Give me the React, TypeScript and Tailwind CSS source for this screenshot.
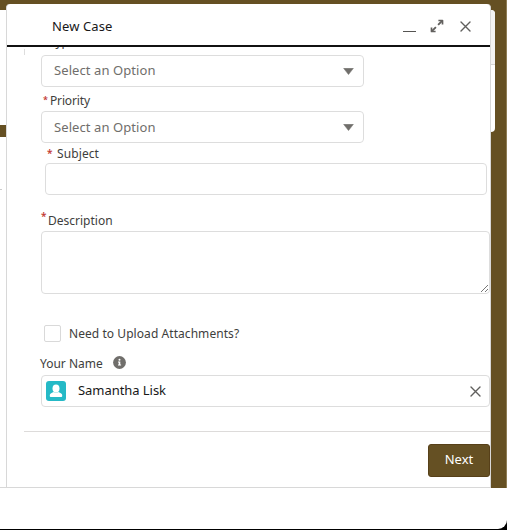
import React from "react";

const font = "font-['Noto_Sans','Open_Sans',sans-serif]";

function Select({ textClass }: { textClass: string }) {
  return (
    <div className="ml-[34px] flex h-[32px] w-[323px] shrink-0 items-center justify-between rounded-[4px] border border-[#dddddd] pl-[12px] pr-[9px]">
      <span className={`${textClass} text-[13px] leading-[18px] tracking-[0.08px] text-[#706e6b]`}>Select an Option</span>
      <svg width="11" height="7" viewBox="0 0 11 7">
        <path d="M.6.3h9.8L5.5 6.6z" fill="#706e6b" stroke="#706e6b" strokeWidth=".5" strokeLinejoin="round" />
      </svg>
    </div>
  );
}

function Cross() {
  return (
    <svg width="11" height="11" viewBox="0 0 11 11" className="shrink-0">
      <path d="M1 1l9 9M10 1l-9 9" stroke="#605f5d" strokeWidth="1.4" strokeLinecap="round" />
    </svg>
  );
}

export default function App() {
  return (
    <div className={`relative h-[530px] w-[507px] overflow-hidden bg-black ${font}`}>
      <div className="flex h-[529px] flex-col overflow-hidden rounded-br-[9px] bg-white">
        <div className="flex h-[488px] w-full flex-col border-r border-[#8e7c55] bg-[#655023]">
          <div className="mt-[10px] h-[122px] w-[495px] rounded-r-[4px] bg-white">
            <div className="h-[55px] rounded-tr-[4px] border-b border-[#d4d4d4] bg-[#f3f3f3]" />
          </div>
        </div>
      </div>

      {/* Page content visible beside the docked composer */}
      <div className="absolute left-0 top-[10px] flex h-[478px] w-[8px] flex-col">
        <div className="h-[115px] bg-white" />
        <div className="h-[12px] bg-[#655023]" />
        <div className="flex-1 bg-white pt-[52px]">
          <div className="h-px w-[2px] bg-[#ccc]" />
        </div>
      </div>

      <div className="absolute left-0 top-[487px] h-px w-[491px] bg-[#d8d8d8]" />

      <section className="absolute left-[6px] top-[4px] flex h-[484px] w-[485px] flex-col overflow-hidden rounded-t-[4px] border-x border-b border-[#d8d8d8] bg-white">
        <header className="flex h-[43px] shrink-0 items-center border-b-2 border-[#111] pl-[45px] pr-[19px]">
          <h1 className="mt-[2px] flex-1 text-[13px] leading-[18px] tracking-[0.1px] text-[#181818]">New Case</h1>
          <div className="mt-[14px] h-[1.5px] w-[13px] bg-[#555452]" />
          <svg width="14" height="14" viewBox="0 0 14 14" className="ml-[14px] mt-[3px]">
            <g fill="none" stroke="#62605e" strokeWidth="1.9">
              <path d="M8.1 5.9l4-4M5.9 8.1l-4 4" />
              <path d="M8.4 1.5h4.1v4.1M1.5 8.4v4.1h4.1" strokeLinejoin="round" strokeWidth="1.7" />
            </g>
          </svg>
          <div className="ml-[16px] mt-[3px]"><Cross /></div>
        </header>

        <div className="flex flex-1 flex-col overflow-hidden">
          <div className="flex h-[8px] shrink-0 overflow-hidden pl-[17px]">
            <div className="mt-[2px] h-[8px] w-px bg-[#ddd]" />
            <span className="-mt-[13px] ml-[24px] text-[12px] leading-[16px] text-[#3e3e3c]">Type</span>
          </div>
          <Select textClass="-mt-[2px]" />
          <div className="flex h-[24px] shrink-0 items-center pl-[36px] pt-[3px] text-[12px] leading-[16px] text-[#3e3e3c]">
            <span className="-mt-[2px] w-[7px] text-[9px] font-semibold text-[#c23934]">*</span>
            <span className="tracking-[-0.15px]">Priority</span>
          </div>
          <Select textClass="mt-0" />
          <div className="flex h-[20px] shrink-0 items-center pl-[40px] pt-[1px] text-[12px] leading-[16px] text-[#3e3e3c]">
            <span className="-mt-[2px] w-[10px] text-[10px] font-semibold text-[#c23934]">*</span>
            <span className="tracking-[0.1px]">Subject</span>
          </div>
          <div className="ml-[38px] h-[32px] w-[442px] shrink-0 rounded-[4px] border border-[#dddddd]" />
          <div className="flex h-[36px] shrink-0 items-center pl-[34px] pt-[15px] text-[12px] leading-[16px] text-[#3e3e3c]">
            <span className="-mt-[9px] w-[7px] text-[10px] font-semibold text-[#c23934]">*</span>
            <span>Description</span>
          </div>
          <div className="ml-[34px] flex h-[63px] shrink-0 items-end justify-end rounded-[4px] border border-[#dddddd]">
            <svg width="9" height="9" viewBox="0 0 9 9">
              <path d="M1 8l7-7M5 8l3-3" stroke="#777" strokeWidth="1" />
            </svg>
          </div>
          <div className="mt-[30px] flex h-[18px] shrink-0 items-center pl-[37px]">
            <div className="h-[17px] w-[17px] rounded-[2px] border border-[#d9d9d9]" />
            <span className="ml-[8px] mt-px text-[12px] leading-[16px] tracking-[0.06px] text-[#3e3e3c]">Need to Upload Attachments?</span>
          </div>
          <div className="flex h-[33px] shrink-0 items-center pl-[33px] pt-[10px] text-[12px] leading-[16px] text-[#3e3e3c]">
            <span>Your Name</span>
            <svg width="13" height="13" viewBox="0 0 13 13" className="-mt-[2px] ml-[10px]">
              <circle cx="6.5" cy="6.5" r="6.4" fill="#706e6b" />
              <circle cx="6.5" cy="3.7" r="1" fill="white" />
              <path d="M5 5.5h2.3v3h.8v1H5v-1h.7v-2H5z" fill="white" />
            </svg>
          </div>
          <div className="ml-[34px] flex h-[32px] shrink-0 items-center rounded-[4px] border border-[#dddddd] pl-[4px] pr-[8px]">
            <svg width="20" height="20" viewBox="0 0 20 20">
              <rect width="20" height="20" rx="3" fill="#25b9c6" />
              <ellipse cx="10" cy="7.4" rx="3.5" ry="4" fill="white" />
              <path d="M3.8 15.3v-1.2c0-1.7 2.3-2.6 4.1-3.2.8.8 3.4.8 4.2 0 1.8.6 4.1 1.5 4.1 3.2v1.2c0 .5-.4.8-.9.8H4.7c-.5 0-.9-.3-.9-.8z" fill="white" />
            </svg>
            <span className="-mt-[2px] ml-[12px] flex-1 text-[13px] leading-[18px] tracking-[-0.05px] text-[#181818]">Samantha Lisk</span>
            <Cross />
          </div>
          <div className="ml-[17px] mt-[24px] flex flex-1 items-start justify-end border-t border-[#dddbda] pt-[12px]">
            <button className="h-[33px] w-[62px] rounded-[3px] border border-[#574019] bg-[#655023] pb-[3px] text-[13px] leading-[18px] text-white">Next</button>
          </div>
        </div>
      </section>
    </div>
  );
}
